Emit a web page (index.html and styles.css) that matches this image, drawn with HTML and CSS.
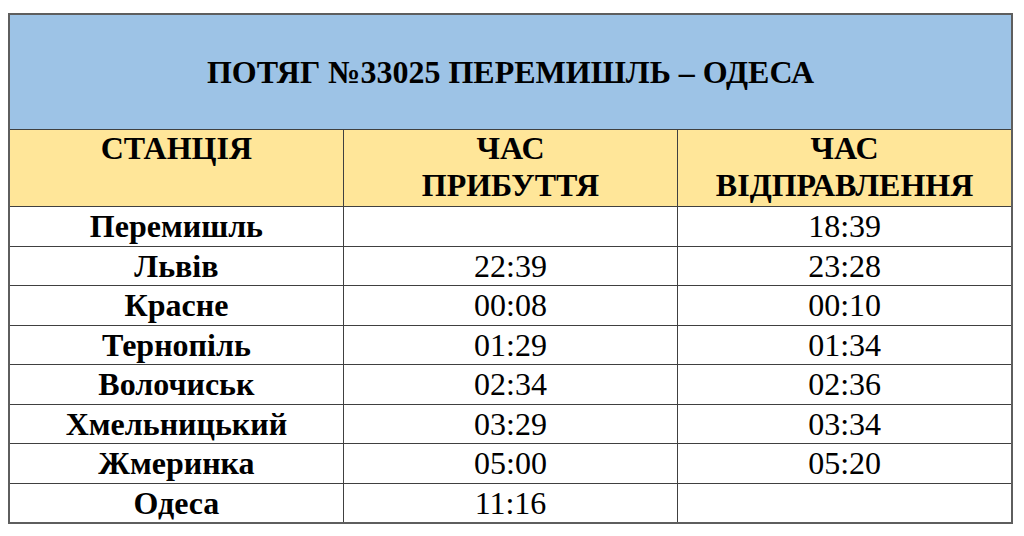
FILE: index.html
```html
<!DOCTYPE html>
<html lang="uk">
<head>
<meta charset="utf-8">
<title>Потяг №33025 Перемишль – Одеса</title>
<link rel="stylesheet" href="styles.css">
</head>
<body>
<div class="page">
<table class="schedule">
  <colgroup><col class="c1"><col class="c2"><col class="c3"></colgroup>
  <thead>
    <tr class="title-row"><th colspan="3">ПОТЯГ №33025 ПЕРЕМИШЛЬ – ОДЕСА</th></tr>
    <tr class="head-row"><th>СТАНЦІЯ</th><th>ЧАС<br>ПРИБУТТЯ</th><th>ЧАС<br>ВІДПРАВЛЕННЯ</th></tr>
  </thead>
  <tbody>
    <tr><th>Перемишль</th><td></td><td>18:39</td></tr>
    <tr><th>Львів</th><td>22:39</td><td>23:28</td></tr>
    <tr><th>Красне</th><td>00:08</td><td>00:10</td></tr>
    <tr><th>Тернопіль</th><td>01:29</td><td>01:34</td></tr>
    <tr><th>Волочиськ</th><td>02:34</td><td>02:36</td></tr>
    <tr><th>Хмельницький</th><td>03:29</td><td>03:34</td></tr>
    <tr><th>Жмеринка</th><td>05:00</td><td>05:20</td></tr>
    <tr><th>Одеса</th><td>11:16</td><td></td></tr>
  </tbody>
</table>
</div>
</body>
</html>
```
FILE: styles.css
```css
html, body {
  margin: 0;
  padding: 0;
  background: #ffffff;
  font-family: "Liberation Serif", "Times New Roman", serif;
}
.page {
  padding: 13px 11px 0 8px;
}
.schedule {
  width: 1005px;
  border-collapse: collapse;
  table-layout: fixed;
  color: #000;
  border: 2px solid #5e5e5e;
}
.schedule th,
.schedule td {
  font-family: "Liberation Serif", "Times New Roman", serif;
  border: 1px solid #404040;
  padding: 0;
  text-align: center;
  font-size: 32px;
}
.schedule tbody th,
.schedule tbody td {
  height: 38.5px;
  line-height: 38px;
  vertical-align: middle;
}
.schedule tbody th { font-weight: bold; }
.schedule tbody td { font-weight: normal; }
.title-row th {
  background: #9dc3e6;
  height: 114px;
  font-size: 32px;
  font-weight: bold;
  vertical-align: middle;
}
.head-row th {
  background: #ffe699;
  height: 76px;
  line-height: 37px;
  font-weight: bold;
  vertical-align: top;
}
```
